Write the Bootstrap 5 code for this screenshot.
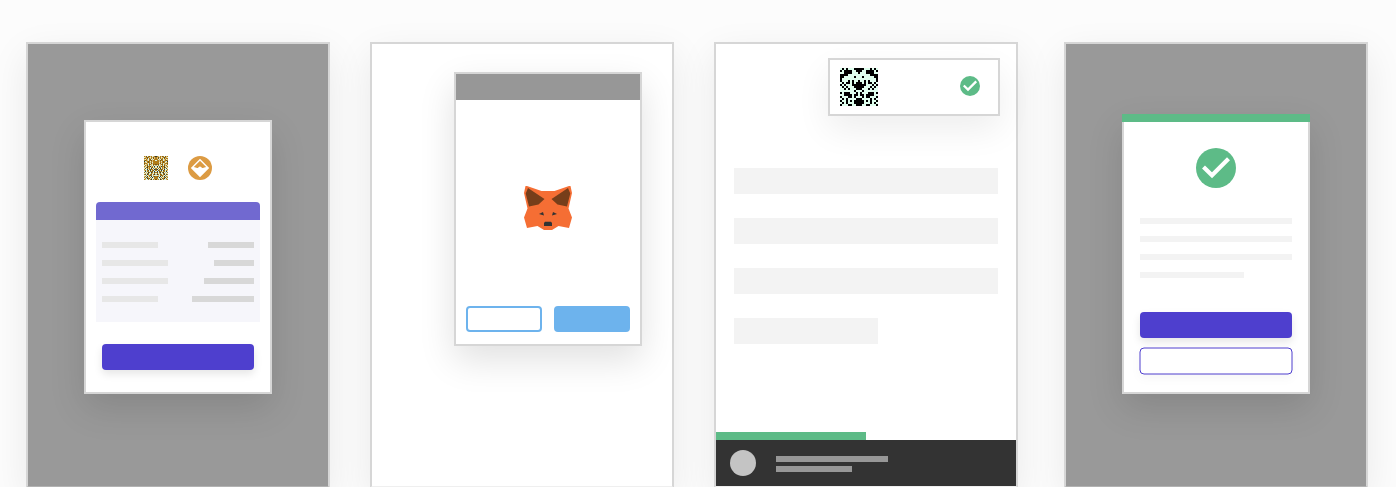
<!DOCTYPE html>
<html lang="en">
<head>
<meta charset="utf-8">
<meta name="viewport" content="width=device-width, initial-scale=1">
<title>Payment flow</title>
<link href="https://cdn.jsdelivr.net/npm/bootstrap@5.3.0/dist/css/bootstrap.min.css" rel="stylesheet">
<style>
body{background:#fcfcfc;overflow:hidden;height:487px;font-family:"Liberation Sans",sans-serif}
.flow{padding:42px 0 0 26px;gap:40px}
.screen{width:304px;height:446px;border:2px solid #d6d6d6;border-bottom-color:rgba(214,214,214,.4);background:#fff;box-shadow:0 12px 36px rgba(0,0,0,.08);flex:none}
.screen.dimmed{background:#999}
.panel{width:188px;height:274px;border:2px solid #d6d6d6;background:#fff;box-shadow:0 14px 34px rgba(0,0,0,.12)}
.panel-pay{margin:76px 0 0 56px;padding:34px 10px 0}
.token-pair{gap:20px}
.summary{margin-top:22px;height:120px;background:#f6f6fb;border-radius:4px 4px 0 0}
.summary-top{height:18px;background:#7169d0;border-radius:4px 4px 0 0}
.summary-rows{padding:22px 6px 0;gap:12px}
.ln{height:6px;background:#e7e7e7}
.ln.dark{background:#d8d8d8}
.w-a{width:56px}.w-b{width:66px}.w-c{width:46px}.w-d{width:40px}.w-e{width:50px}.w-f{width:62px}
.cta{display:block;width:152px;height:26px;padding:0;border:0;border-radius:4px;background:#4e3fce;box-shadow:0 4px 8px rgba(0,0,0,.1)}
.panel-pay .cta{margin-top:22px}
.panel-wallet{margin:28px 0 0 82px}
.wallet-bar{height:26px;background:#979797}
.fox{margin-top:86px}
.wallet-actions{margin-top:76px;gap:12px}
.wbtn{width:76px;height:26px;padding:0;border:2px solid #6db3ed;border-radius:4px}
.wbtn.solid{background:#6db3ed}
.toast-box{width:172px;height:58px;margin:14px 16px 0 auto;padding:8px 18px 8px 10px;border:2px solid #d6d6d6;background:#fff;box-shadow:0 14px 34px rgba(0,0,0,.07)}
.toast-check{margin-bottom:2px}
.content-rows{padding:52px 18px 0;gap:24px}
.block-row{height:26px;background:#f3f3f3}
.block-row.short{width:144px}
.progress-line{width:150px;height:8px;background:#5dbb87}
.dock{height:46px;background:#333;padding:10px 14px}
.avatar-dot{width:26px;height:26px;background:#c4c4c4;margin-right:20px}
.dock-lines{padding-top:6px}
.dock .ln{background:#979797}
.w-g{width:112px}.w-h{width:76px}
.last-screen{margin-left:6px}
.panel-done{height:280px;margin:70px 0 0 56px;border:0}
.done-top{height:8px;background:#5dbb87}
.done-body{height:272px;border:2px solid #d6d6d6;border-top:0;padding:26px 16px 0}
.done-lines{margin-top:30px;gap:12px}
.done-lines .ln{background:#f3f3f3}
.w-i{width:104px}
.done-body .cta{margin-top:34px}
.outline-cta{margin:9px 0 0 -1px;filter:drop-shadow(0 4px 4px rgba(0,0,0,.03))}
</style>
</head>
<body>
<main class="flow d-flex">
  <section class="screen dimmed">
    <div class="panel panel-pay">
      <div class="token-pair d-flex justify-content-center">
        <svg id="merchant" width="24" height="24" viewBox="0 0 24 24" shape-rendering="crispEdges"></svg>
        <svg width="24" height="24" viewBox="0 0 24 24"><circle cx="12" cy="12" r="12" fill="#dc9b43"/><path fill="#fff" fill-rule="evenodd" d="M12 2.8 21.2 12 12 21.2 2.8 12ZM12 4.8 5.8 11.1 8.4 11.7Q9.6 12.6 10.6 11.2Q12 9.8 13.4 11.2Q14.4 12.6 15.6 11.7L18.2 11.1Z"/></svg>
      </div>
      <div class="summary">
        <div class="summary-top"></div>
        <div class="summary-rows d-flex flex-column">
          <div class="d-flex justify-content-between"><div class="ln w-a"></div><div class="ln dark w-c"></div></div>
          <div class="d-flex justify-content-between"><div class="ln w-b"></div><div class="ln dark w-d"></div></div>
          <div class="d-flex justify-content-between"><div class="ln w-b"></div><div class="ln dark w-e"></div></div>
          <div class="d-flex justify-content-between"><div class="ln w-a"></div><div class="ln dark w-f"></div></div>
        </div>
      </div>
      <button class="btn cta mx-auto" aria-label="Pay"></button>
    </div>
  </section>

  <section class="screen">
    <div class="panel panel-wallet">
      <div class="wallet-bar"></div>
      <svg class="fox d-block mx-auto" width="48" height="44" viewBox="0 0 48 44"><path fill="#f56e34" d="M3 0 17.500 5H30.500L45 0H46.500L48 7 44.500 22.500 48 31.500 45 42 34.500 40 28 44H20L13.500 40 3 42 0 31.500 3.500 22.500 0 7 1.500 0Z"/><path fill="#763e1a" d="M4 2 20.500 13 14.500 18.500 5 20.500 1.700 7.500ZM44 2 27.500 13 33.500 18.500 43 20.500 46.300 7.500Z"/><path fill="#333" d="M15 28 19 26 20 29.400ZM33 28 29 26 28 29.400ZM21 35.800H27L28 37V40H20V37Z"/></svg>
      <div class="wallet-actions d-flex justify-content-center">
        <button class="btn wbtn" aria-label="Reject"></button>
        <button class="btn wbtn solid" aria-label="Confirm"></button>
      </div>
    </div>
  </section>

  <section class="screen d-flex flex-column">
    <div class="toast-box d-flex justify-content-between align-items-center">
      <svg id="account" width="38" height="38" viewBox="0 0 19 19" shape-rendering="crispEdges"></svg>
      <svg class="toast-check" width="20" height="20" viewBox="0 0 40 40"><circle cx="20" cy="20" r="20" fill="#5dbb87"/><path d="M7.500 19 16 27.200 32.500 10.700" fill="none" stroke="#fff" stroke-width="4.500"/></svg>
    </div>
    <div class="content-rows d-flex flex-column">
      <div class="block-row"></div><div class="block-row"></div><div class="block-row"></div><div class="block-row short"></div>
    </div>
    <div class="mt-auto">
      <div class="progress-line"></div>
      <div class="dock d-flex">
        <div class="avatar-dot rounded-circle"></div>
        <div class="dock-lines d-flex flex-column gap-1"><div class="ln w-g"></div><div class="ln w-h"></div></div>
      </div>
    </div>
  </section>

  <section class="screen dimmed last-screen">
    <div class="panel panel-done">
      <div class="done-top"></div>
      <div class="done-body">
        <svg class="d-block mx-auto" width="40" height="40" viewBox="0 0 40 40"><circle cx="20" cy="20" r="20" fill="#5dbb87"/><path d="M7.500 19 16 27.200 32.500 10.700" fill="none" stroke="#fff" stroke-width="4.200"/></svg>
        <div class="done-lines d-flex flex-column">
          <div class="ln"></div><div class="ln"></div><div class="ln"></div><div class="ln w-i"></div>
        </div>
        <button class="btn cta" aria-label="Done"></button>
        <svg class="outline-cta d-block" width="154" height="28" viewBox="0 0 154 28"><rect x="1" y="1" width="152" height="26" rx="4" fill="#fff" stroke="#4e3fce"/></svg>
      </div>
    </div>
  </section>
</main>
<script>
// Draws a mirrored pixel avatar from one character per cell.
function pixels(id, rows, colors, odd) {
  const svg = document.getElementById(id);
  rows.forEach((half, y) => {
    const mirror = half.split('').reverse().join('').slice(odd ? 1 : 0);
    (half + mirror).split('').forEach((c, x) => {
      const r = document.createElementNS('http://www.w3.org/2000/svg', 'rect');
      r.setAttribute('x', x); r.setAttribute('y', y);
      r.setAttribute('width', 1); r.setAttribute('height', 1);
      r.setAttribute('fill', colors[c]);
      svg.appendChild(r);
    });
  });
}
pixels('account', [
  '.#.#...###','#.####..##','..####...#','####......','##.....#..','#.........',
  '#...#.#..#','.#.##.#.##','#.#...####','.#.#...###','..#.#...##','.......#..',
  '#.###...#.','..####.##.','#...##.#..','.#.#....##','#..#.#.###','.#.#...###','#...##..##'
], {'#':'#000','.':'#dfffee'}, true);
pixels('merchant', [
  'oabgobaogaok','gaoboagoabao','ooabgoaogbao','agoagobgagoo','oboagoobaoog','kgaobogoaooo',
  'oagoboaogooo','booagogbaooo','ogaogboagbob','goabgogagoga','oagbookaogkg','agokaogobgog',
  'gbgoaogkgogo','oggkgoboogkb','aogobgkgobgo','gkgoogoobgkg','ogagkogkogbo','gagobggoagog',
  'obgkogobgoka','ggogaobogagg','aogkgogkgobo','ogboagogkgoo','gogkobgoggoo','oaggogokgoab'
], {o:'#b07c18',a:'#e0bd72',b:'#755619',g:'#d9f2df',k:'#303b35'}, false);
</script>
<script src="https://cdn.jsdelivr.net/npm/bootstrap@5.3.0/dist/js/bootstrap.bundle.min.js"></script>
</body>
</html>
